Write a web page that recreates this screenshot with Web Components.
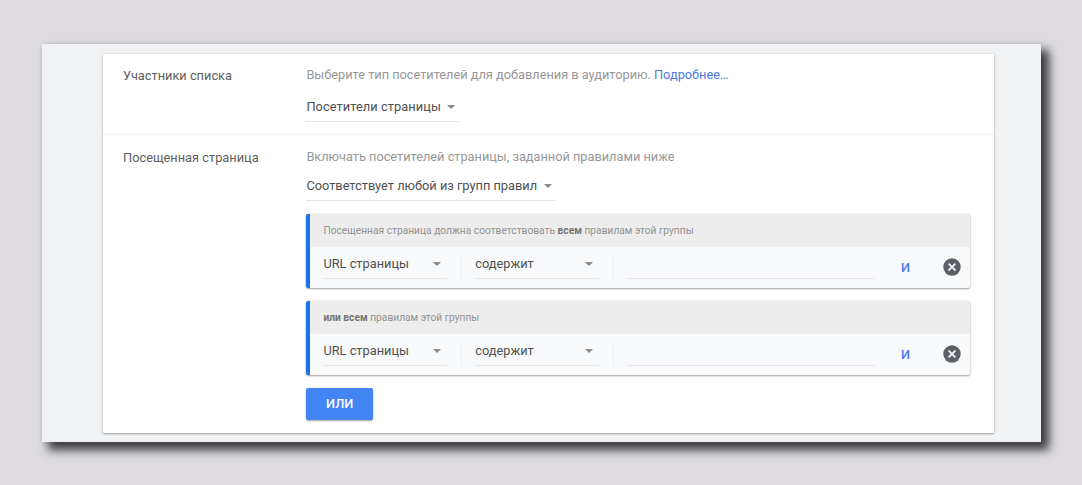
<!DOCTYPE html>
<html lang="ru">
<head>
<meta charset="utf-8">
<title>Аудитория</title>
<style>
  html, body { margin: 0; height: 100%; }
  body { background: #dddbe0; font-family: Roboto, "Liberation Sans", sans-serif; font-size: 12.8px; color: #5e5e5e; overflow: hidden; }
</style>
</head>
<body>
<audience-page>
  <form-section label="Участники списка" style="--h:81px">
    <hint-text>Выберите тип посетителей для добавления в аудиторию. <a>Подробнее…</a></hint-text>
    <select-field style="--w:155px;--mt:17px;--ls:.08px">Посетители страницы</select-field>
  </form-section>
  <form-section label="Посещенная страница" class="last" style="--h:298px;--top:15px">
    <hint-text>Включать посетителей страницы, заданной правилами ниже</hint-text>
    <select-field style="--w:250px;--mt:14px">Соответствует любой из групп правил</select-field>
    <rule-group>Посещенная страница должна соответствовать <b>всем</b> правилам этой группы</rule-group>
    <rule-group><b>или всем</b> правилам этой группы</rule-group>
    <raised-button>ИЛИ</raised-button>
  </form-section>
</audience-page>

<script>
const define = (name, html) => {
  const template = document.createElement('template');
  template.innerHTML = html;
  customElements.define(name, class extends HTMLElement {
    constructor() {
      super();
      this.attachShadow({ mode: 'open' }).append(template.content.cloneNode(true));
    }
    connectedCallback() {
      const label = this.shadowRoot.querySelector('[data-label]');
      if (label) label.textContent = this.getAttribute('label');
    }
  });
};

define('audience-page', `
  <style>
    :host { display: block; box-sizing: border-box; height: 485px; padding: 44px 41px 43px 42px; }
    .frame { box-sizing: border-box; height: 398px; padding: 10px 47px 9px 61px; background: #f0f2f4;
      box-shadow: 7px 7px 9px 1px #3c3d3f, 0 0 3px rgba(0,0,0,.1); }
    main { height: 379px; background: #fff; border-radius: 1px; box-shadow: 0 1px 2px rgba(0,0,0,.3), 0 0 3px rgba(0,0,0,.12); }
  </style>
  <div class="frame"><main><slot></slot></main></div>
`);

define('form-section', `
  <style>
    :host { display: grid; grid-template-columns: 183.4px 664px; box-sizing: border-box; height: var(--h);
      padding: var(--top, 14px) 0 0 20px; border-bottom: 1px solid #efefef; }
    :host(.last) { border-bottom: 0; }
    .label { line-height: 16px; }
    .body { display: flex; flex-direction: column; align-items: flex-start; margin-top: -1px; }
  </style>
  <div class="label" data-label></div>
  <div class="body"><slot></slot></div>
`);

define('hint-text', `
  <style>
    :host { display: block; line-height: 15px; color: #979797; letter-spacing: -.02px; white-space: nowrap; }
    ::slotted(a) { color: #4d79e6; }
  </style>
  <slot></slot>
`);

define('select-field', `
  <style>
    :host { display: flex; box-sizing: border-box; align-items: flex-start; width: var(--w); height: 23px;
      margin-top: var(--mt, 0); border-bottom: 1px solid #e7e7e7; line-height: 15px; letter-spacing: var(--ls, 0);
      color: #505050; white-space: nowrap; justify-content: var(--jc, flex-start); }
    svg { flex: none; width: 8px; height: 4px; margin: 6px 6px 0 6.5px; fill: #8a8a8a; }
  </style>
  <slot></slot><svg viewBox="0 0 8 4"><path d="M0 0h8L4 4z"/></svg>
`);

define('rule-group', `
  <style>
    :host { display: block; box-sizing: border-box; width: 664px; height: 74px; margin-top: 13px;
      border-left: 4px solid #1a73e8; border-radius: 2px; background: #f8f9fb;
      box-shadow: 0 1px 2px rgba(0,0,0,.34), 0 0 3px rgba(0,0,0,.1); }
    header { height: 33px; padding-left: 13px; border-radius: 0 2px 0 0; background: #ededed; color: #929292;
      font-size: 10.2px; line-height: 33px; letter-spacing: .015px; white-space: nowrap; }
    ::slotted(b) { color: #757575; font-weight: 700; }
    .row { display: flex; height: 41px; padding: 9px 9px 0 13px; box-sizing: border-box; }
    select-field { --w: 124px; --jc: space-between; }
    i { width: 1px; height: 22px; margin: 1px 13.5px 0; background: #eeeff1; }
    .input { width: 248px; height: 23px; box-sizing: border-box; border-bottom: 1px solid #e6e6e8; }
    .and { width: 61px; text-align: center; color: #4b7bf0; font-weight: 500; line-height: 23px; }
    .close { width: 18px; height: 18px; margin: 2px 0 0 7.5px; }
  </style>
  <header><slot></slot></header>
  <div class="row">
    <select-field>URL страницы</select-field><i></i>
    <select-field>содержит</select-field><i></i>
    <span class="input"></span>
    <span class="and">И</span>
    <svg class="close" viewBox="0 0 18 18"><circle cx="9" cy="9" r="8.7" fill="#5c6066"/><path d="M5.6 5.6l6.8 6.8M12.4 5.6l-6.8 6.8" stroke="#f4f5f6" stroke-width="1.8"/></svg>
  </div>
`);

define('raised-button', `
  <style>
    :host { display: block; width: 66.5px; height: 32px; margin-top: 13px; border-radius: 2px; background: #4285f4;
      color: #fff; font-weight: 500; line-height: 32px; text-align: center;
      box-shadow: 0 1px 2px rgba(0,0,0,.36); }
  </style>
  <slot></slot>
`);
</script>
</body>
</html>
